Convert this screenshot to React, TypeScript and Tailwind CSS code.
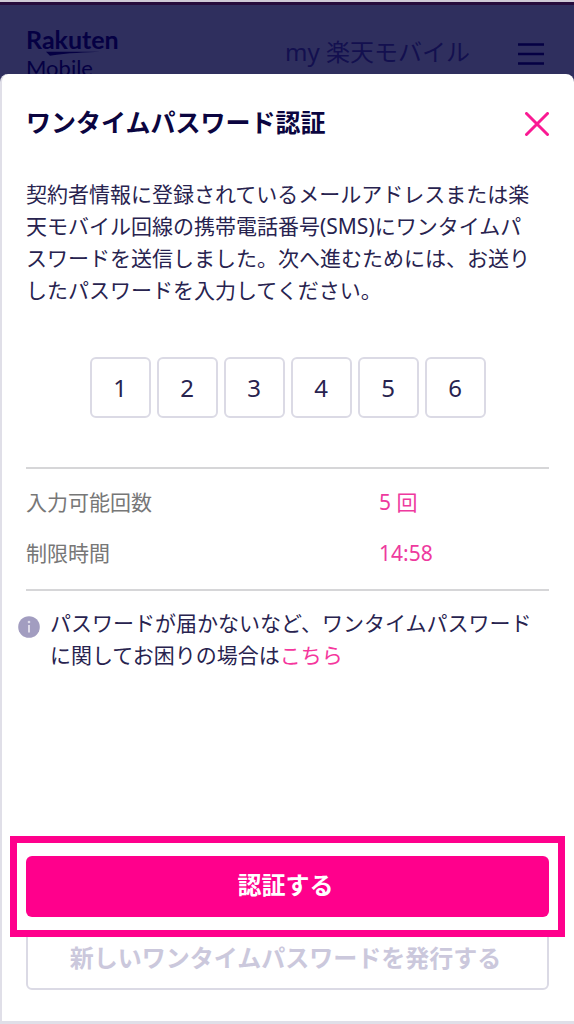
import { useState } from 'react';

const CODE_LENGTH = 6;

function Logo() {
  return (
    <div className="font-['Lato',sans-serif] text-[#050043]">
      <div className="text-[25px] leading-4 font-bold">Rakuten</div>
      <svg className="mt-1 ml-5 h-[5px] w-[54px]" viewBox="0 0 54 5" fill="currentColor" aria-hidden="true">
        <path d="M0 0.8H54C40 1.5 22 1.8 4 4.8Z" />
      </svg>
      <div className="text-[22px] leading-6">Mobile</div>
    </div>
  );
}

function Header() {
  return (
    <header className="flex h-[74px] items-start justify-between overflow-hidden border-t-2 border-[#cfcad6] bg-[#2f2f5e] pr-[30px] pl-[26px] shadow-[inset_0_3px_0_#270c3c]">
      <div className="pt-[29px]">
        <Logo />
      </div>
      <div className="flex items-center gap-12 pt-8">
        <span className="text-2xl leading-9 text-[#13104f]">my 楽天モバイル</span>
        <button type="button" aria-label="メニュー" className="pt-1 text-[#050043]">
          <svg className="block h-[22px] w-[26px]" viewBox="0 0 26 22" stroke="currentColor" strokeWidth="2.4">
            <path d="M0 1.5H26M0 11H26M0 20.5H26" />
          </svg>
        </button>
      </div>
    </header>
  );
}

export default function App() {
  const [code, setCode] = useState(['1', '2', '3', '4', '5', '6']);

  const updateDigit = (index: number, value: string) => {
    setCode(code.map((d, i) => (i === index ? value.slice(-1) : d)));
  };

  return (
    <div
      lang="ja"
      className="flex min-h-screen flex-col bg-[#e2e1ea] font-['Noto_Sans','Noto_Sans_CJK_JP',sans-serif] text-[#28234f]"
    >
      <Header />

      <div className="flex grow flex-col bg-[#2f2f5e]">
        <main className="flex grow flex-col rounded-t-lg border-b-3 border-l-2 border-[#e0dfe8] bg-white pr-[25px] pb-[31px] pl-6">
          <div className="flex items-center justify-between pt-8">
            <h1 className="pb-1 text-[25px] leading-8 font-bold text-[#0b0540]">ワンタイムパスワード認証</h1>
            <button type="button" aria-label="閉じる" className="text-[#fa1a93]">
              <svg
                className="block size-6"
                viewBox="0 0 24 24"
                fill="none"
                stroke="currentColor"
                strokeWidth="3"
                strokeLinecap="round"
              >
                <path d="M1.5 1.5L22.5 22.5M22.5 1.5L1.5 22.5" />
              </svg>
            </button>
          </div>

          <p className="mt-9 text-[21px] leading-8">
            契約者情報に登録されているメールアドレスまたは楽
            <br />
            天モバイル回線の携帯電話番号(SMS)にワンタイムパ
            <br />
            スワードを送信しました。次へ進むためには、お送り
            <br />
            したパスワードを入力してください。
          </p>

          <div className="mt-[51px] flex justify-center gap-[6px]">
            {Array.from({ length: CODE_LENGTH }, (_, i) => (
              <input
                key={i}
                type="text"
                inputMode="numeric"
                aria-label={`${i + 1}桁目`}
                value={code[i]}
                onChange={(e) => updateDigit(i, e.target.value)}
                className="size-[61px] rounded-md border-2 border-[#dbdae5] text-center text-2xl outline-none focus:border-[#ff008c]"
              />
            ))}
          </div>

          <dl className="mt-[49px] border-y-2 border-[#d6d6d8] pt-2 pb-[10px] text-[21px] leading-[51px]">
            <div className="flex">
              <dt className="w-[353px] text-[#777777]">入力可能回数</dt>
              <dd className="text-[#ee3a9e]">5 回</dd>
            </div>
            <div className="flex">
              <dt className="w-[353px] text-[#777777]">制限時間</dt>
              <dd className="text-[#ee3a9e]">14:58</dd>
            </div>
          </dl>

          <div className="mt-4 -ml-2 flex items-start gap-[10px]">
            <svg className="mt-[9px] size-[22px] shrink-0" viewBox="0 0 22 22" aria-hidden="true">
              <circle cx="11" cy="11" r="10.8" fill="#a29dc0" />
              <circle cx="11" cy="6" r="1.3" fill="#dedbea" />
              <path d="M11 9V16.5" fill="none" stroke="#dedbea" strokeWidth="2" />
            </svg>
            <p className="text-[21px] leading-8">
              パスワードが届かないなど、ワンタイムパスワード
              <br />
              に関してお困りの場合は
              <a href="#" className="text-[#f5379d]">
                こちら
              </a>
            </p>
          </div>

          <div className="mt-auto flex flex-col">
            <div className="relative z-10 -mx-4 border-7 border-[#ff008c] bg-white px-[9px] py-[13px]">
              <button
                type="button"
                className="h-[61px] w-full rounded-md bg-[#ff008c] pr-1 pb-1 text-2xl font-bold text-white"
              >
                認証する
              </button>
            </div>
            <button
              type="button"
              className="-mt-2 h-[61px] rounded-md border-2 border-[#dbdae5] pr-1 pb-1 text-2xl font-bold text-[#cbc8dc]"
            >
              新しいワンタイムパスワードを発行する
            </button>
          </div>
        </main>
      </div>
    </div>
  );
}
